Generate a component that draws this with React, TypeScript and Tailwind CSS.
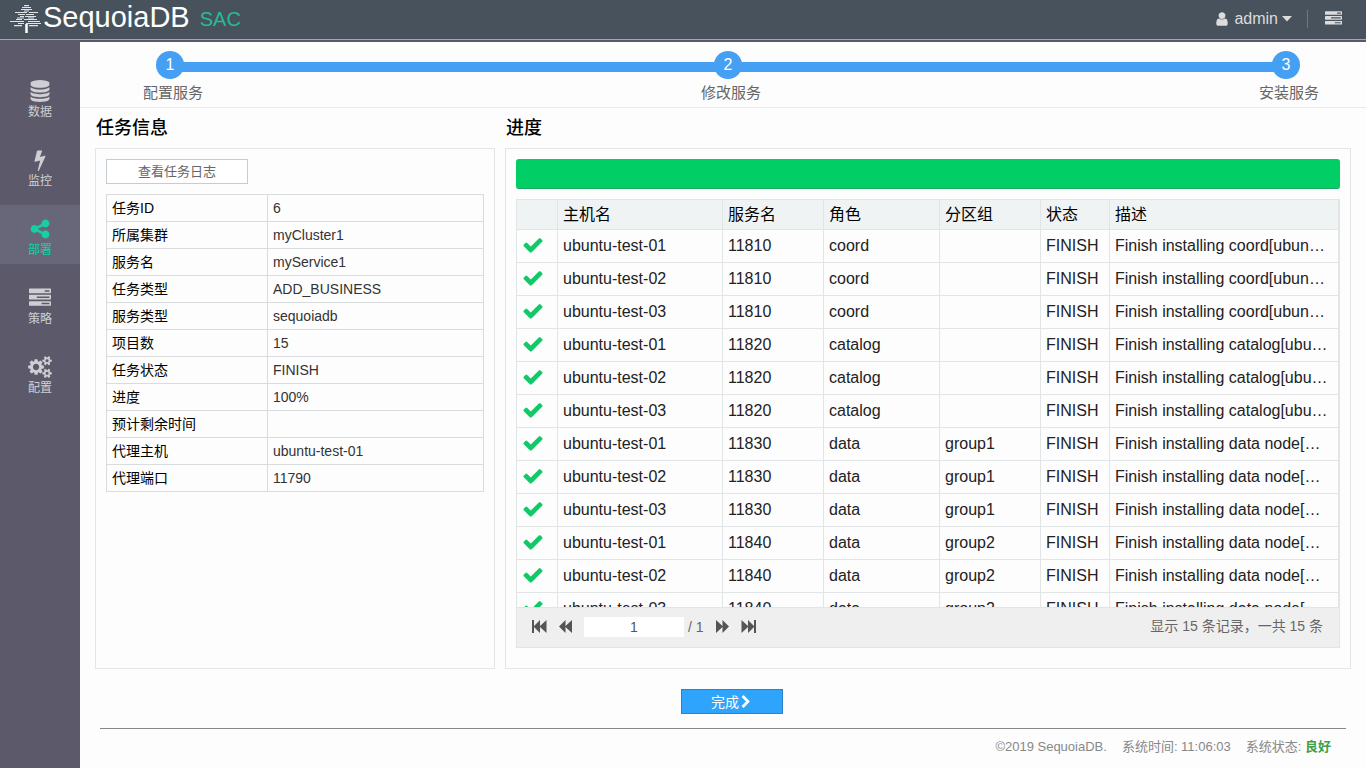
import type { ReactNode } from "react";

type IconProps = { d: string; className?: string; width?: number };

function Icon({ d, className, width = 1792 }: IconProps) {
  return (
    <svg viewBox={"0 0 " + width + " 1792"} fill="currentColor" aria-hidden="true" className={className}>
      <path d={d} />
    </svg>
  );
}

const CHECK =
  "M1671 566q0 40-28 68l-724 724-136 136q-28 28-68 28t-68-28l-136-136-362-362q-28-28-28-68t28-68l136-136q28-28 68-28t68 28l294 295 656-657q28-28 68-28t68 28l136 136q28 28 28 68z";
const USER =
  "M1536 1399q0 109-62.5 187t-150.5 78h-854q-88 0-150.5-78t-62.5-187q0-85 8.5-160.5t31.5-152 58.5-131 94-89 134.5-34.5q131 128 313 128t313-128q76 0 134.5 34.5t94 89 58.5 131 31.5 152 8.500 160.500zm-256-887q0 159-112.500 271.500t-271.500 112.500-271.500-112.500-112.500-271.500 112.500-271.500 271.500-112.500 271.500 112.500 112.500 271.500z";
const DATABASE =
  "M896 768q237 0 443-43t325-127v170q0 69-103 128t-280 93.5-385 34.5-385-34.5-280-93.5-103-128v-170q119 84 325 127t443 43zm0 768q237 0 443-43t325-127v170q0 69-103 128t-280 93.5-385 34.5-385-34.5-280-93.5-103-128v-170q119 84 325 127t443 43zm0-384q237 0 443-43t325-127v170q0 69-103 128t-280 93.5-385 34.5-385-34.5-280-93.5-103-128v-170q119 84 325 127t443 43zm0-1152q208 0 385 34.5t280 93.5 103 128v128q0 69-103 128t-280 93.5-385 34.5-385-34.5-280-93.5-103-128v-128q0-69 103-128t280-93.5 385-34.5z";
const BOLT =
  "M1333 566q18 20 7 44l-540 1157q-13 25-42 25-4 0-14-2-17-5-25.5-19t-4.5-30l197-808-406 101q-4 1-12 1-18 0-31-11-18-15-13-39l201-825q4-14 16-23t28-9h328q19 0 32 12.5t13 29.5q0 8-5 18l-171 463 396-98q8-2 12-2 19 0 34 15z";
const SHARE =
  "M1344 1024q133 0 226.5 93.5t93.5 226.5-93.5 226.5-226.5 93.5-226.5-93.5-93.5-226.5q0-12 2-34l-360-180q-92 86-218 86-133 0-226.5-93.5t-93.5-226.5 93.5-226.5 226.5-93.5q126 0 218 86l360-180q-2-22-2-34 0-133 93.5-226.5t226.5-93.5 226.5 93.5 93.5 226.5-93.5 226.5-226.5 93.5q-126 0-218-86l-360 180q2 22 2 34t-2 34l360 180q92-86 218-86z";
const TASKS =
  "M1024 1408h640v-128h-640v128zm-384-512h1024v-128h-1024v128zm640-512h384v-128h-384v128zm512 832v256q0 26-19 45t-45 19h-1664q-26 0-45-19t-19-45v-256q0-26 19-45t45-19h1664q26 0 45 19t19 45zm0-512v256q0 26-19 45t-45 19h-1664q-26 0-45-19t-19-45v-256q0-26 19-45t45-19h1664q26 0 45 19t19 45zm0-512v256q0 26-19 45t-45 19h-1664q-26 0-45-19t-19-45v-256q0-26 19-45t45-19h1664q26 0 45 19t19 45z";
const CHEVRON =
  "M1363 877l-742 742q-19 19-45 19t-45-19l-166-166q-19-19-19-45t19-45l531-531-531-531q-19-19-19-45t19-45l166-166q19-19 45-19t45 19l742 742q19 19 19 45t-19 45z";
const COGS =
  "M896 896q0-106-75-181t-181-75-181 75-75 181 75 181 181 75 181-75 75-181zm768 512q0-52-38-90t-90-38-90 38-38 90q0 53 37.5 90.5t90.5 37.5 90.5-37.5 37.5-90.5zm0-1024q0-52-38-90t-90-38-90 38-38 90q0 53 37.5 90.5t90.5 37.5 90.5-37.5 37.5-90.5zm-384 421v185q0 10-7 19.5t-16 10.5l-155 24q-11 35-32 76 34 48 90 115 7 11 7 20 0 12-7 19-23 30-82.5 89.5t-78.5 59.5q-11 0-21-7l-115-90q-37 19-77 31-11 108-23 155-7 24-30 24h-186q-11 0-20-7.5t-10-17.5l-23-153q-34-10-75-31l-118 89q-7 7-20 7-11 0-21-8-144-133-144-160 0-9 7-19 10-14 41-53t47-61q-23-44-35-82l-152-24q-10-1-17-9.5t-7-19.5v-185q0-10 7-19.5t16-10.5l155-24q11-35 32-76-34-48-90-115-7-11-7-20 0-12 7-20 22-30 82-89t79-59q11 0 21 7l115 90q34-18 77-32 11-108 23-154 7-24 30-24h186q11 0 20 7.5t10 17.5l23 153q34 10 75 31l118-89q8-7 20-7 11 0 21 8 144 133 144 160 0 8-7 19-12 16-42 54t-45 60q23 48 34 82l152 23q10 2 17 10.5t7 19.5zm640 533v140q0 16-149 31-12 27-30 52 51 113 51 138 0 4-4 7-122 71-124 71-8 0-46-47t-52-68q-20 2-30 2t-30-2q-14 21-52 68t-46 47q-2 0-124-71-4-3-4-7 0-25 51-138-18-25-30-52-149-15-149-31v-140q0-16 149-31 13-29 30-52-51-113-51-138 0-4 4-7 4-2 35-20t59-34 30-16q8 0 46 46.5t52 67.5q20-2 30-2t30 2q51-71 92-112l6-2q4 0 124 70 4 3 4 7 0 25-51 138 17 23 30 52 149 15 149 31zm0-1024v140q0 16-149 31-12 27-30 52 51 113 51 138 0 4-4 7-122 71-124 71-8 0-46-47t-52-68q-20 2-30 2t-30-2q-14 21-52 68t-46 47q-2 0-124-71-4-3-4-7 0-25 51-138-18-25-30-52-149-15-149-31v-140q0-16 149-31 13-29 30-52-51-113-51-138 0-4 4-7 4-2 35-20t59-34 30-16q8 0 46 46.5t52 67.5q20-2 30-2t30 2q51-71 92-112l6-2q4 0 124 70 4 3 4 7 0 25-51 138 17 23 30 52 149 15 149 31z";

function TreeLogo() {
  return (
    <svg viewBox="0 0 32 28" className="h-7 w-8" fill="none" stroke="#dfe3e6" strokeWidth="1.200" aria-hidden="true">
      <path d="M14 .6h5M12 2.500h9M11 4.500h11M14 6h5M5 7.500h12M19 7.500h9M8 9.500h7M16 9.500h8M10 11.500h4M15 11.500h11M7 13h7M18 13h6M6 14.500h6M14 14.500h13M0 16.500h14M18 16.500h12M8 18.500h6M16 18.500h15M4 20.700h8M19 20.700h9" />
      <path d="M16.500 19v9" strokeWidth="2.500" stroke="#ffffff" />
    </svg>
  );
}

function Header() {
  return (
    <header className="flex h-[42px] items-stretch border-b-2 border-[#5b596a]">
      <div className="flex flex-1 items-center justify-between border-b border-[#a4a6b2] bg-[#47525d] pr-6 pb-0.5 pl-2.5">
        <a href="#home" className="flex items-center">
          <TreeLogo />
          <span className="pb-1 pl-px text-[29px] leading-[30px] text-white">SequoiaDB</span>
          <span className="pl-2.5 text-xl leading-6 text-[#25bb96]">SAC</span>
        </a>
        <div className="flex items-center text-[#dcdcdc]">
          <button type="button" className="flex items-center gap-1 pr-[15px] text-base leading-5">
            <Icon d={USER} className="size-4" />
            admin
            <svg viewBox="0 0 10 6" className="h-1.5 w-2.5" fill="currentColor" aria-hidden="true">
              <path d="M0 0h10L5 5.500z" />
            </svg>
          </button>
          <div className="h-[18px] border-l border-[#73777f] pr-[17px]" />
          <button type="button" aria-label="任务列表">
            <Icon d={TASKS} className="size-[17px]" />
          </button>
        </div>
      </div>
    </header>
  );
}

const NAV: { label: string; icon: ReactNode; active?: boolean }[] = [
  { label: "数据", icon: <Icon d={DATABASE} className="size-[22px]" /> },
  { label: "监控", icon: <Icon d={BOLT} className="size-[22px]" /> },
  { label: "部署", icon: <Icon d={SHARE} className="size-[22px]" />, active: true },
  { label: "策略", icon: <Icon d={TASKS} className="size-[22px]" /> },
  { label: "配置", icon: <Icon d={COGS} width={1920} className="h-[22px] w-6" /> },
];

function Sidebar() {
  return (
    <nav className="flex w-20 shrink-0 flex-col gap-2.5 bg-[#5c5a6a] pt-[25px]">
      {NAV.map((item) => (
        <a
          key={item.label}
          href={"#" + item.label}
          className={
            item.active
              ? "flex h-[59px] flex-col items-center bg-[#68677a] pt-3 text-[#14d0a3]"
              : "flex h-[59px] flex-col items-center pt-3 text-[#cfcfd3]"
          }
        >
          <span className="flex h-6 items-center">{item.icon}</span>
          <span className="text-xs leading-[18px]">{item.label}</span>
        </a>
      ))}
    </nav>
  );
}

function Steps() {
  return (
    <div className="h-[66px] border-b border-[#ebebeb] pt-[9px] pr-12 pl-[58px]">
      <ol className="relative flex justify-between">
        <li aria-hidden="true" className="absolute top-[11px] right-8 left-8 h-2.5 bg-[#459ff2]" />
        {["配置服务", "修改服务", "安装服务"].map((name, i) => (
          <li key={name} className="relative flex w-16 flex-col items-center">
            <span className="flex size-7 items-center justify-center rounded-full bg-[#459ff2] text-base text-white">
              {i + 1}
            </span>
            <span className="pl-1.5 text-[15px] leading-7 whitespace-nowrap text-[#666]">{name}</span>
          </li>
        ))}
      </ol>
    </div>
  );
}

const INFO = [
  ["任务ID", "6"],
  ["所属集群", "myCluster1"],
  ["服务名", "myService1"],
  ["任务类型", "ADD_BUSINESS"],
  ["服务类型", "sequoiadb"],
  ["项目数", "15"],
  ["任务状态", "FINISH"],
  ["进度", "100%"],
  ["预计剩余时间", ""],
  ["代理主机", "ubuntu-test-01"],
  ["代理端口", "11790"],
];

function TaskInfo() {
  return (
    <section className="flex w-[400px] shrink-0 flex-col">
      <h2 className="h-10 pl-px text-lg leading-10 font-medium">任务信息</h2>
      <div className="flex-1 border border-[#e4e6e6] p-2.5">
        <button
          type="button"
          className="mb-2.5 block h-[25px] w-[142px] border border-[#c5ccd3] bg-white text-[13px] leading-[23px] text-[#666]"
        >
          查看任务日志
        </button>
        <table className="w-full table-fixed border-separate border-spacing-0 border-t border-l border-[#d9dcdc] text-sm leading-[26px]">
          <tbody>
            {INFO.map(([label, value]) => (
              <tr key={label} className="h-[27px]">
                <th
                  scope="row"
                  className="w-[161px] border-r border-b border-[#d9dcdc] px-[5px] text-left font-normal text-black"
                >
                  {label}
                </th>
                <td className="border-r border-b border-[#d9dcdc] px-[5px] text-[#333]">{value}</td>
              </tr>
            ))}
          </tbody>
        </table>
      </div>
    </section>
  );
}

const HOSTS = ["ubuntu-test-01", "ubuntu-test-02", "ubuntu-test-03"];
const GROUPS = [
  { port: "11810", role: "coord", group: "", text: "coord" },
  { port: "11820", role: "catalog", group: "", text: "catalog" },
  { port: "11830", role: "data", group: "group1", text: "data node" },
  { port: "11840", role: "data", group: "group2", text: "data node" },
  { port: "11850", role: "data", group: "group3", text: "data node" },
];
const ROWS = GROUPS.flatMap((g) => HOSTS.map((host) => ({ ...g, host })));

const COLUMNS = [
  { name: "", width: "w-[41px]" },
  { name: "主机名", width: "w-[165px]" },
  { name: "服务名", width: "w-[101px]" },
  { name: "角色", width: "w-[116px]" },
  { name: "分区组", width: "w-[101px]" },
  { name: "状态", width: "w-[69px]" },
  { name: "描述", width: "" },
];

function Cell({ children }: { children: ReactNode }) {
  return <td className="truncate border-r border-b border-[#e2e5e5] pr-2.5 pl-[5px]">{children}</td>;
}

function PageButton({ label, d, wide }: { label: string; d: string; wide?: boolean }) {
  return (
    <button type="button" aria-label={label} className={wide ? "w-[15px]" : "w-[13px]"}>
      <svg
        viewBox={wide ? "0 0 15 12" : "0 0 12 12"}
        preserveAspectRatio="none"
        className="h-[13px] w-full"
        fill="currentColor"
        aria-hidden="true"
      >
        <path d={d} />
      </svg>
    </button>
  );
}

function Progress() {
  return (
    <section className="flex min-w-0 flex-1 flex-col">
      <h2 className="h-10 pl-px text-lg leading-10 font-medium">进度</h2>
      <div className="flex-1 border border-[#e4e6e6] px-2.5 pt-2.5 pb-5">
        <div
          role="progressbar"
          aria-valuenow={100}
          aria-label="进度"
          className="mb-2.5 h-[30px] rounded-[3px] border-b border-[#1aaa60] bg-[#02ce66]"
        />
        <div className="border border-[#e2e5e5]">
          <div className="h-[407px] overflow-y-auto [scrollbar-width:none]">
            <table className="w-full table-fixed border-separate border-spacing-0 text-base leading-8 text-[#222]">
              <thead>
                <tr className="h-[30px]">
                  {COLUMNS.map((c) => (
                    <th
                      key={c.name}
                      scope="col"
                      className={
                        c.width +
                        " sticky top-0 z-10 h-[30px] border-r border-b border-[#e2e5e5] bg-[#f0f3f4] px-[5px] text-left leading-7 font-normal text-black"
                      }
                    >
                      {c.name}
                    </th>
                  ))}
                </tr>
              </thead>
              <tbody>
                {ROWS.map((r) => (
                  <tr key={r.host + r.port} className="h-[33px]">
                    <Cell>
                      <Icon d={CHECK} className="mb-0.5 size-[22px] text-[#12c968]" />
                    </Cell>
                    <Cell>{r.host}</Cell>
                    <Cell>{r.port}</Cell>
                    <Cell>{r.role}</Cell>
                    <Cell>{r.group}</Cell>
                    <Cell>FINISH</Cell>
                    <Cell>{"Finish installing " + r.text + "[" + r.host + ":" + r.port + "]"}</Cell>
                  </tr>
                ))}
              </tbody>
            </table>
          </div>
          <div className="flex h-10 items-start justify-between border-t border-[#e2e5e5] bg-[#efefef] pt-2 pr-4 pl-[15px] text-sm leading-5 text-[#666]">
            <div className="flex items-start">
              <div className="flex items-center gap-3 pt-1 pr-3 text-[#555]">
                <PageButton label="第一页" wide d="M0 0h2v5.500L8 0v5.500L14.500 0v12L8 6.500V12L2 6.500V12H0z" />
                <PageButton label="上一页" d="M0 6L6 0v5.500L12 0v12L6 6.500V12z" />
              </div>
              <input
                aria-label="页码"
                defaultValue="1"
                className="mt-px h-5 w-[100px] bg-white text-center text-sm text-[#555] outline-none"
              />
              <span className="px-1 pt-px">/ 1</span>
              <div className="flex items-center gap-3 pt-1 pl-2 text-[#555]">
                <PageButton label="下一页" d="M12 6L6 0v5.500L0 0v12l6-5.500V12z" />
                <PageButton label="最后一页" wide d="M15 0h-2v5.500L7 0v5.500L.5 0v12L7 6.500V12l6-5.500V12h2z" />
              </div>
            </div>
            <span>显示 15 条记录，一共 15 条</span>
          </div>
        </div>
      </div>
    </section>
  );
}

export default function App() {
  return (
    <div className="flex min-h-screen flex-col bg-[#fdfdfd] font-['Liberation_Sans','Noto_Sans_CJK_SC',sans-serif] text-black">
      <Header />
      <div className="flex flex-1">
        <Sidebar />
        <main className="min-w-0 flex-1">
          <Steps />
          <div className="flex gap-2.5 px-[15px]">
            <TaskInfo />
            <Progress />
          </div>
          <div className="flex justify-center pt-5 pl-[18px]">
            <button
              type="button"
              className="flex h-[25px] w-[102px] items-center justify-center border border-[#2b84c8] bg-[#2fa4fc] text-sm text-white"
            >
              完成
              <Icon d={CHEVRON} className="size-3.5" />
            </button>
          </div>
          <footer className="mx-5 mt-3.5 flex justify-end gap-[15px] border-t border-[#888] pt-2 pr-[15px] text-[13px] leading-5 text-[#888]">
            <span>©2019 SequoiaDB.</span>
            <span>系统时间: 11:06:03</span>
            <span>
              系统状态: <b className="text-[#41a047]">良好</b>
            </span>
          </footer>
        </main>
      </div>
    </div>
  );
}
